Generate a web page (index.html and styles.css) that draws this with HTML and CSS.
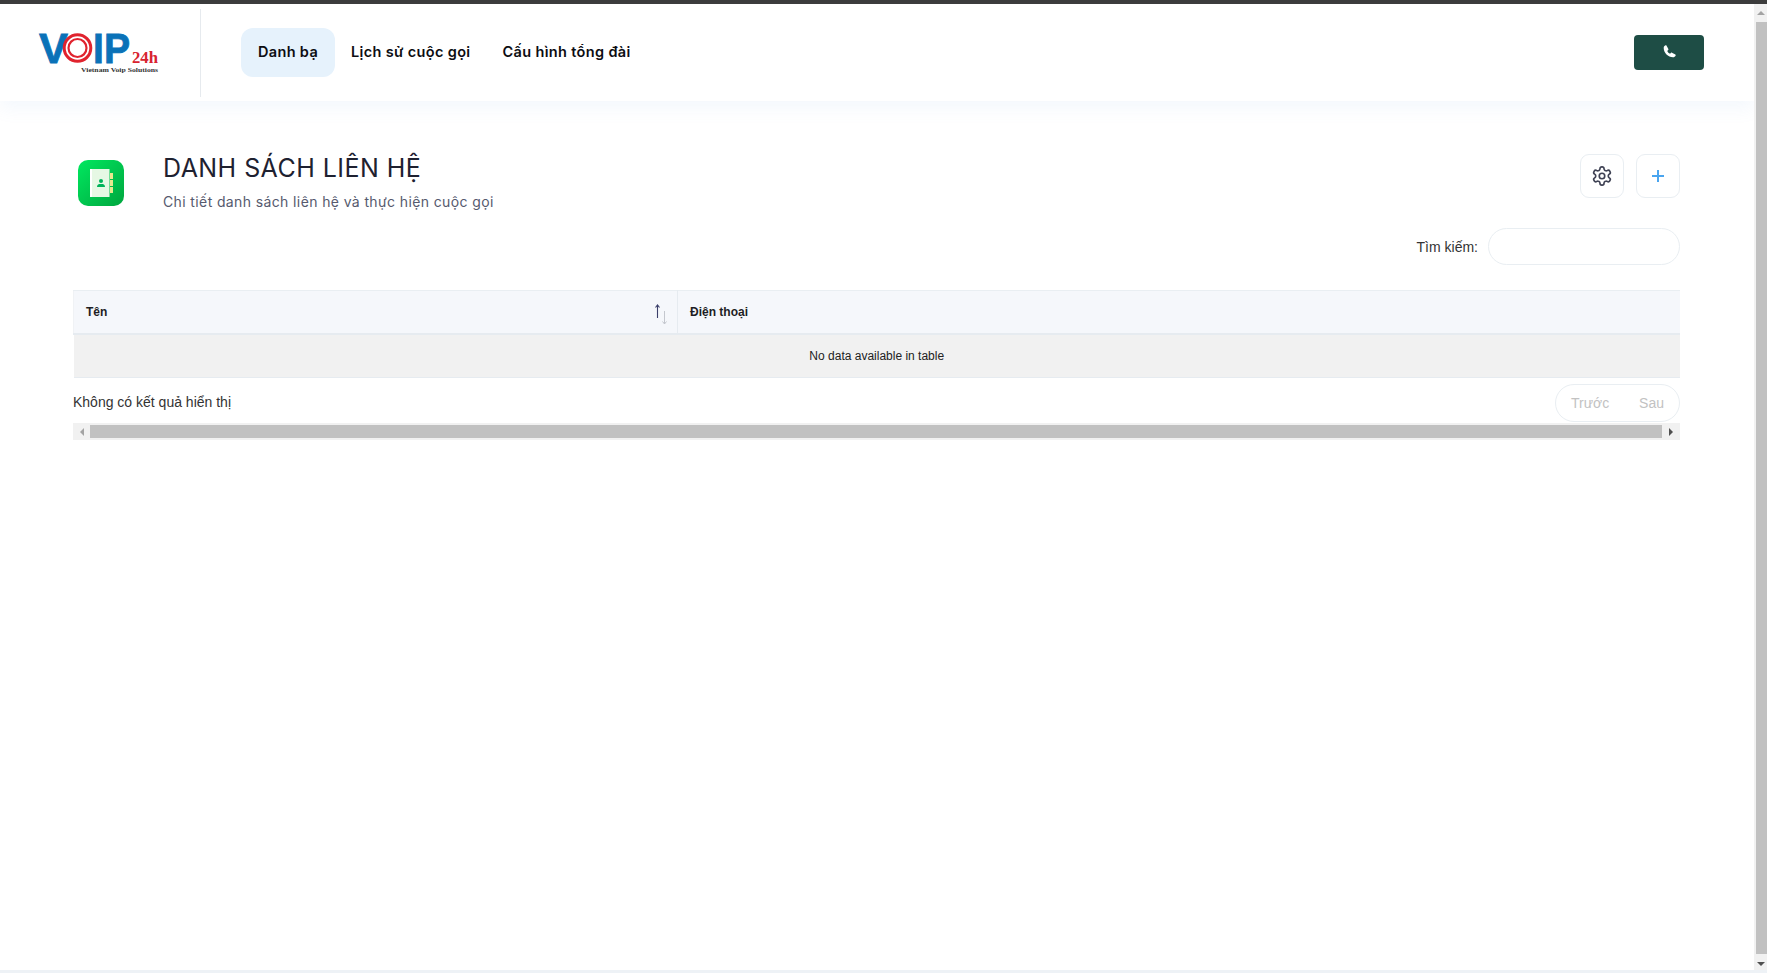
FILE: index.html
```html
<!DOCTYPE html>
<html lang="vi">
<head>
<meta charset="utf-8">
<title>Danh sách liên hệ</title>
<link rel="stylesheet" href="styles.css">
</head>
<body>
<div class="window">
  <div class="topbar"></div>
  <div class="middle">
    <div class="page">
      <header class="header">
        <div class="brand">
          <svg class="logo" width="124" height="42" viewBox="0 0 124 42">
            <text x="0" y="29.500" class="logo-v" textLength="29" lengthAdjust="spacingAndGlyphs">V</text>
            <circle cx="38.500" cy="15" r="13.300" fill="none" stroke="#e0232e" stroke-width="3"/>
            <circle cx="38.500" cy="15" r="9" fill="none" stroke="#e0232e" stroke-width="2.200"/>
            <text x="54" y="29.500" class="logo-v" textLength="37" lengthAdjust="spacingAndGlyphs">IP</text>
            <text x="93" y="29.500" class="logo-24" textLength="26" lengthAdjust="spacingAndGlyphs">24h</text>
            <text x="42" y="39" class="logo-tag" textLength="77" lengthAdjust="spacingAndGlyphs">Vietnam Voip Solutions</text>
          </svg>
        </div>
        <nav class="nav">
          <a class="nav-link active">Danh bạ</a>
          <a class="nav-link">Lịch sử cuộc gọi</a>
          <a class="nav-link">Cấu hình tổng đài</a>
        </nav>
        <button class="call-btn" aria-label="Gọi">
          <svg width="13" height="13" viewBox="0 0 24 24"><path fill="#fff" d="M6.600 1.200 9.900 7.400c.3.6.2 1.300-.3 1.800L7.800 11c1.100 2.300 2.900 4.100 5.200 5.200l1.800-1.800c.5-.5 1.200-.6 1.800-.3l6.200 3.300c.7.400.9 1.200.6 1.900-.9 2-2.800 3.400-5 3.400C9.500 22.700 1.300 14.500 1.300 5.600c0-2.200 1.400-4.100 3.400-5 .7-.3 1.500-.1 1.900.6z"/></svg>
        </button>
      </header>

      <main class="content">
        <section class="page-head">
          <div class="app-icon">
            <svg width="46" height="46" viewBox="0 0 46 46">
              <defs><linearGradient id="g" x1="0" y1="0" x2="1" y2="1"><stop offset="0" stop-color="#00e85f"/><stop offset="1" stop-color="#00a63e"/></linearGradient></defs>
              <rect width="46" height="46" rx="10" fill="url(#g)"/>
              <rect x="12" y="9" width="19.500" height="28" fill="#e6f8e4"/>
              <rect x="12" y="9" width="2" height="28" fill="#fff"/>
              <rect x="32" y="13" width="3" height="6" fill="#e9e88f"/>
              <rect x="32" y="20" width="3" height="6" fill="#e9e88f"/>
              <rect x="32" y="27" width="3" height="6" fill="#e9e88f"/>
              <circle cx="23" cy="21" r="2" fill="#00b35a"/>
              <path d="M19 27c0-2.500 1.500-3 4-3s4 .5 4 3z" fill="#00b35a"/>
            </svg>
          </div>
          <div class="titles">
            <h1>DANH SÁCH LIÊN HỆ</h1>
            <p>Chi tiết danh sách liên hệ và thực hiện cuộc gọi</p>
          </div>
          <div class="head-actions">
            <button class="icon-btn" aria-label="Cài đặt">
              <svg width="22" height="22" viewBox="0 0 24 24" fill="none" stroke="#3f4254" stroke-width="1.800" stroke-linecap="round" stroke-linejoin="round"><path d="M12.220 2h-.44a2 2 0 0 0-2 2v.18a2 2 0 0 1-1 1.730l-.43.25a2 2 0 0 1-2 0l-.15-.08a2 2 0 0 0-2.730.73l-.22.38a2 2 0 0 0 .73 2.730l.15.1a2 2 0 0 1 1 1.720v.51a2 2 0 0 1-1 1.740l-.15.09a2 2 0 0 0-.73 2.730l.22.38a2 2 0 0 0 2.730.73l.15-.08a2 2 0 0 1 2 0l.43.25a2 2 0 0 1 1 1.730V20a2 2 0 0 0 2 2h.44a2 2 0 0 0 2-2v-.18a2 2 0 0 1 1-1.730l.43-.25a2 2 0 0 1 2 0l.15.08a2 2 0 0 0 2.730-.73l.22-.39a2 2 0 0 0-.73-2.730l-.15-.08a2 2 0 0 1-1-1.740v-.5a2 2 0 0 1 1-1.740l.15-.09a2 2 0 0 0 .73-2.730l-.22-.38a2 2 0 0 0-2.730-.73l-.15.08a2 2 0 0 1-2 0l-.43-.25a2 2 0 0 1-1-1.730V4a2 2 0 0 0-2-2z"/><circle cx="12" cy="12" r="3"/></svg>
            </button>
            <button class="icon-btn" aria-label="Thêm">
              <svg width="14" height="14" viewBox="0 0 14 14" stroke="#4aa5ef" stroke-width="2"><path d="M7 1v12M1 7h12"/></svg>
            </button>
          </div>
        </section>

        <div class="search-row">
          <label class="search-label" for="q">Tìm kiếm:</label>
          <input id="q" class="search-input" type="text">
        </div>

        <table class="table">
          <thead>
            <tr>
              <th class="col-name">Tên
                <svg class="sort" width="16" height="22" viewBox="0 0 16 22">
                  <path d="M4.500 15V2M2.500 4.500l2-2.500 2 2.500" fill="none" stroke="#3b3f6a" stroke-width="1.100"/>
                  <path d="M11.500 8v13M9.500 18.500l2 2.500 2-2.500" fill="none" stroke="#c4c7ce" stroke-width="1"/>
                </svg>
              </th>
              <th>Điện thoại</th>
            </tr>
          </thead>
          <tbody>
            <tr><td colspan="2">No data available in table</td></tr>
          </tbody>
        </table>

        <div class="table-foot">
          <span class="info">Không có kết quả hiển thị</span>
          <div class="pager"><span>Trước</span><span>Sau</span></div>
        </div>

        <div class="hscroll">
          <span class="arrow arrow-left"></span>
          <span class="hthumb"></span>
          <span class="arrow arrow-right"></span>
        </div>
      </main>
    </div>
    <div class="vscroll">
      <span class="arrow arrow-up"></span>
      <span class="vthumb"></span>
      <span class="arrow arrow-down"></span>
    </div>
  </div>
  <div class="bottom-strip"></div>
</div>
</body>
</html>
```
FILE: styles.css
```css
* { box-sizing: border-box; }
html, body { margin: 0; height: 100%; overflow: hidden; }
body { background: #fff; font-family: "Liberation Sans", Arial, sans-serif; color: #222; }

.window { display: flex; flex-direction: column; height: 973px; }
.topbar { height: 4px; background: #3c3c3c; flex: none; }
.middle { display: flex; flex: 1; min-height: 0; }
.page { flex: 1; min-width: 0; display: flex; flex-direction: column; }
.bottom-strip { height: 3px; background: #eef2f6; flex: none; }

.header {
  height: 97px; flex: none; display: flex; align-items: center;
  padding-right: 50px; background: #fff;
  box-shadow: 0 8px 16px rgba(120, 170, 230, 0.08);
}
.brand {
  width: 201px; height: 88px; align-self: flex-start; margin-top: 5px;
  border-right: 1px solid #e6eaee; padding: 24px 0 0 39px;
}
.logo { display: block; overflow: visible; }
.logo-v { font: bold 42px "Liberation Sans", sans-serif; fill: #0a72b8; stroke: #0a72b8; stroke-width: 0.8px; }
.logo-24 { font: bold 17px "Liberation Serif", serif; fill: #d8232f; }
.logo-tag { font: bold 6.500px "Liberation Serif", serif; fill: #333; }

.nav { display: flex; margin-left: 40px; flex: 1; }
.nav-link {
  height: 49px; padding: 0 16px 2px; display: flex; align-items: center; justify-content: center;
  font: 600 14.500px Inter, sans-serif; letter-spacing: 0.35px; color: #0d0d12; border-radius: 12px;
}
.nav-link.active { background: #e6f2fc; min-width: 94px; }

.call-btn {
  width: 70px; height: 35px; background: #1e4d45; border: 0; border-radius: 4px;
  display: flex; align-items: flex-start; justify-content: center; padding-top: 10px;
}

.content { padding: 53px 74px 0 73px; }
.page-head { display: flex; align-items: flex-start; }
.app-icon { margin: 6px 39px 0 5px; height: 46px; }
.titles { flex: 1; }
.titles h1 { margin: 0; font: 400 25px/28px Inter, sans-serif; letter-spacing: 0.45px; color: #1e2130; }
.titles p { margin: 10px 0 0; font: 400 14px/20px Inter, sans-serif; letter-spacing: 0.38px; color: #565a6e; }
.head-actions { display: flex; gap: 12px; }
.icon-btn {
  width: 44px; height: 44px; background: #fff; border: 1px solid #e9eef2; border-radius: 9px;
  display: flex; align-items: center; justify-content: center; padding: 0;
}

.search-row { display: flex; justify-content: flex-end; align-items: center; gap: 10px; margin-top: 16px; }
.search-label { font-size: 14px; color: #333; }
.search-input { width: 192px; height: 37px; border: 1px solid #e9eef2; border-radius: 19px; background: #fff; }

.table { width: 100%; border-collapse: collapse; table-layout: fixed; margin-top: 25px; font-size: 12px; }
.table th {
  height: 43px; background: #f5f7fb; text-align: left; padding: 0 12px; font-weight: bold; color: #1e1e24;
  border-top: 1px solid #e9eef2; border-bottom: 2px solid #e6ebf0;
}
.col-name { width: 604px; border-right: 1px solid #e6ebf0; border-left: 1px solid #f0f2f5; position: relative; }
.sort { position: absolute; right: 8px; top: 12px; }
.table td {
  height: 44px; background: #f1f1f1; text-align: center; color: #222;
  border-bottom: 1px solid #e6ebf0;
}

.table-foot { display: flex; justify-content: space-between; height: 45px; padding-top: 6px; }
.info { font-size: 14px; line-height: 36px; color: #333; }
.pager {
  width: 125px; height: 38px; border: 1px solid #e9eef2; border-radius: 19px;
  display: flex; justify-content: space-between; align-items: center; padding: 0 15px; color: #c2c2c2; font-size: 14px;
}

.hscroll { display: flex; align-items: center; height: 17px; background: #f1f1f1; }
.hthumb { flex: 1; height: 13px; background: #c1c1c1; }
.arrow { flex: none; width: 0; height: 0; border-style: solid; border-color: transparent; }
.arrow-left { border-width: 4px 4px 4px 0; border-right-color: #a3a3a3; margin: 0 6px 0 7px; }
.arrow-right { border-width: 4px 0 4px 4px; border-left-color: #505050; margin: 0 7px 0 7px; }

.vscroll { width: 13px; flex: none; background: #f1f1f1; display: flex; flex-direction: column; align-items: flex-end; }
.vthumb { width: 11px; flex: 1; background: #c1c1c1; margin-top: 7px; margin-bottom: 8px; }
.arrow-up { border-width: 0 4px 4px; border-bottom-color: #a3a3a3; margin: 7px 2px 0 0; }
.arrow-down { border-width: 4px 4px 0; border-top-color: #505050; margin: 0 2px 4px 0; }
```
